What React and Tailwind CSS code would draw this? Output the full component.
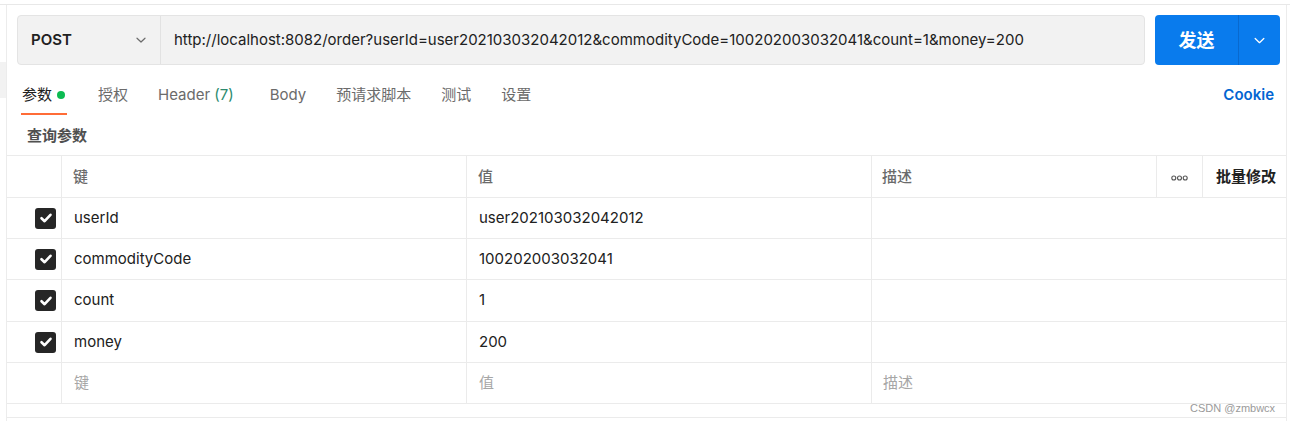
import React from "react";

const font = { fontFamily: 'Inter, "Noto Sans CJK SC", sans-serif' };

function Check() {
  return (
    <div className="w-[21px] h-[21px] rounded-[3px] bg-[#262626] flex items-center justify-center">
      <svg width="14" height="14" viewBox="0 0 14 14" fill="none">
        <path d="M2.5 7.2 L5.6 10.2 L11.5 3.8" stroke="white" strokeWidth="2.6" strokeLinecap="round" strokeLinejoin="round" />
      </svg>
    </div>
  );
}

function Chevron({ color = "#6b6b6b", size = 12 }) {
  return (
    <svg width={size} height={size} viewBox="0 0 12 12" fill="none">
      <path d="M2 4.2 L6 8 L10 4.2" stroke={color} strokeWidth="1.2" strokeLinecap="round" strokeLinejoin="round" />
    </svg>
  );
}

const rows = [
  ["userId", "user202103032042012"],
  ["commodityCode", "100202003032041"],
  ["count", "1"],
  ["money", "200"],
];

export default function App() {
  return (
    <div className="w-[1290px] h-[421px] bg-white overflow-hidden relative text-[#212121] text-[15px]" style={font}>
      <div className="h-[4px]" />
      <div className="flex border-t border-[#e8e8e8] h-[417px]">
        {/* left strip */}
        <div className="w-[6px] shrink-0 flex flex-col">
          <div className="h-[57px]" />
          <div className="h-[36px] bg-[#f2f2f2]" />
        </div>
        {/* main */}
        <div className="w-[1281px] shrink-0 border-l border-r border-[#ececec] flex flex-col">
          {/* url row */}
          <div className="flex pl-[10px] pr-[6px] pt-[10px] gap-[10px]">
            <div className="flex h-[50px] w-[1128px] rounded-[4px] border border-[#e4e4e4] bg-[#f2f2f2]">
              <div className="w-[143px] flex items-center justify-between pl-[13px] pr-[13px] border-r border-[#e2e2e2]">
                <span className="font-semibold text-[#212121]">POST</span>
                <Chevron />
              </div>
              <div className="flex items-center pl-[13px] text-[#212121]">
                http://localhost:8082/order?userId=user202103032042012&amp;commodityCode=100202003032041&amp;count=1&amp;money=200
              </div>
            </div>
            <div className="flex h-[50px] w-[125px] rounded-[4px] bg-[#097bed] text-white">
              <div className="w-[84px] flex items-center justify-center border-r border-[#0869cf] text-[18px] font-bold">
                发送
              </div>
              <div className="flex-1 flex items-center justify-center">
                <Chevron color="#ffffff" size={13} />
              </div>
            </div>
          </div>
          {/* tabs */}
          <div className="flex h-[51px] pl-[15px] pr-[12px] pt-[19px] text-[#6b6b6b] leading-[22px]">
            <div className="flex flex-col">
              <div className="flex items-center gap-[5px] text-[#212121] h-[22px]">
                <span>参数</span>
                <span className="w-[8px] h-[8px] rounded-full bg-[#0cbb52]" />
              </div>
              <div className="h-[2px] w-[46px] bg-[#ff6c37] mt-[7px] -ml-[1px]" />
            </div>
            <span className="ml-[31px]">授权</span>
            <span className="ml-[30px]">
              Header <span className="text-[#2b8a6e]">(7)</span>
            </span>
            <span className="ml-[36px]">Body</span>
            <span className="ml-[30px]">预请求脚本</span>
            <span className="ml-[30px]">测试</span>
            <span className="ml-[30px]">设置</span>
            <span className="ml-auto font-semibold text-[#0265d2]">Cookie</span>
          </div>
          {/* query label */}
          <div className="h-[39px] pl-[20px] pt-[9px] leading-[22px] font-semibold text-[#505050]">查询参数</div>
          {/* table */}
          <div className="border-t border-[#ebebeb]">
            <div className="flex h-[42px] border-b border-[#ebebeb] text-[#6b6b6b] font-medium">
              <div className="w-[55px] border-r border-[#ebebeb]" />
              <div className="w-[405px] border-r border-[#ebebeb] flex items-center pl-[11px] pt-[2px]">键</div>
              <div className="w-[405px] border-r border-[#ebebeb] flex items-center pl-[11px] pt-[2px]">值</div>
              <div className="w-[285px] border-r border-[#ebebeb] flex items-center pl-[10px] pt-[2px]">描述</div>
              <div className="w-[46px] border-r border-[#ebebeb] flex items-center justify-center pt-[2px]">
                <svg width="17" height="6" viewBox="0 0 17 6" fill="none">
                  <circle cx="2.8" cy="3" r="2" stroke="#555" strokeWidth="1.1" />
                  <circle cx="8.5" cy="3" r="2" stroke="#555" strokeWidth="1.1" />
                  <circle cx="14.2" cy="3" r="2" stroke="#555" strokeWidth="1.1" />
                </svg>
              </div>
              <div className="flex-1 flex items-center pl-[13px] pt-[2px] font-bold text-[#212121]">批量修改</div>
            </div>
            {rows.map(([k, v], i) => (
              <div key={k} className={`flex border-b border-[#ebebeb] ${i === 2 ? "h-[42px]" : "h-[41px]"}`}>
                <div className="w-[55px] border-r border-[#ebebeb] flex items-center justify-end pr-[5px]">
                  <Check />
                </div>
                <div className="w-[405px] border-r border-[#ebebeb] flex items-center pl-[12px]">{k}</div>
                <div className="w-[405px] border-r border-[#ebebeb] flex items-center pl-[12px]">{v}</div>
                <div className="flex-1" />
              </div>
            ))}
            <div className="flex h-[41px] border-b border-[#ebebeb] text-[#a6a6a6]">
              <div className="w-[55px] border-r border-[#ebebeb]" />
              <div className="w-[405px] border-r border-[#ebebeb] flex items-center pl-[12px]">键</div>
              <div className="w-[405px] border-r border-[#ebebeb] flex items-center pl-[12px]">值</div>
              <div className="flex-1 flex items-center pl-[11px]">描述</div>
            </div>
            <div className="h-[14px] border-b border-[#ebebeb]" />
          </div>
        </div>
      </div>
      <div className="absolute left-[1190px] top-[400px] text-[11px] text-[#9a9a9a]" style={{ fontFamily: '"Liberation Sans", Arial, sans-serif' }}>
        CSDN @zmbwcx
      </div>
    </div>
  );
}
